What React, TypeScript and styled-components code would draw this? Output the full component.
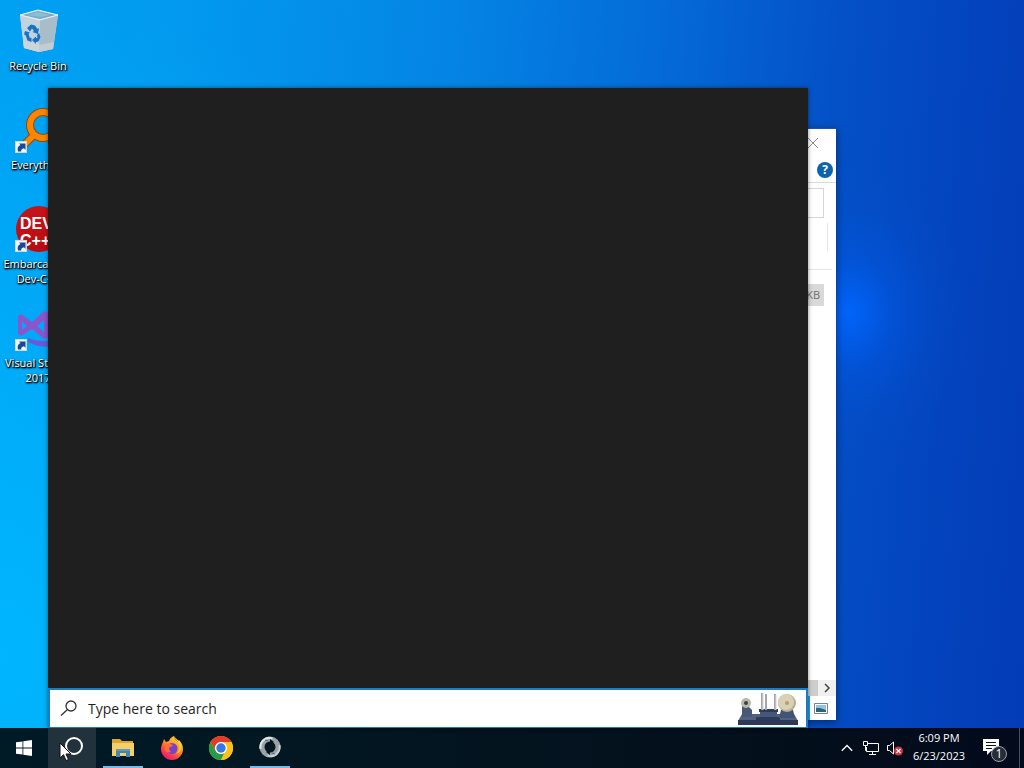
import React, { useState } from 'react'
import styled, { createGlobalStyle } from 'styled-components';

const GlobalStyle = createGlobalStyle`
  * {
    box-sizing: border-box;
  }
  body {
    margin: 0;
    font-family: "Open Sans", "Noto Sans", sans-serif;
    font-size: 11px;
    overflow: hidden;
  }
  button {
    padding: 0;
    border: none;
    background: none;
    font: inherit;
    color: inherit;
  }
  svg {
    display: block;
  }
`;

const Screen = styled.div`
  display: flex;
  flex-direction: column;
  height: 100vh;
`;

const Desktop = styled.main`
  position: relative;
  flex: 1;
  min-height: 0;
  background:
    radial-gradient(ellipse 120px 150px at 83% 43%, rgba(0, 102, 255, 0.9), rgba(0, 92, 240, 0.4) 35%, rgba(0, 84, 220, 0.12) 70%, rgba(0, 80, 210, 0) 100%),
    radial-gradient(ellipse 60% 90% at 0% 90%, rgba(0, 184, 255, 0.9), rgba(0, 176, 255, 0) 100%),
    linear-gradient(95deg, #00a0f2 0%, #029af0 16%, #0484e4 42%, #046cd8 60%, #0450c6 78%, #0342bc 92%, #033cb6 100%);
`;

const IconColumn = styled.div`
  display: flex;
  flex-direction: column;
  width: 76px;
`;

const Shortcut = styled.button`
  display: flex;
  flex-direction: column;
  align-items: center;
  gap: 2px;
  height: 99px;
  padding-top: 8px;
`;

const ShortcutLabel = styled.span`
  width: 72px;
  color: #fff;
  line-height: 15px;
  text-align: center;
  text-shadow: 0 1px 2px #000, 1px 1px 2px #000, 1px 1px 1px #000;
`;

const ExplorerWindow = styled.section`
  position: absolute;
  top: 128px;
  right: 188px;
  bottom: 8px;
  width: 640px;
  display: flex;
  flex-direction: column;
  background: #fff;
  border: 1px solid #1556b4;
  border-width: 1px 0 0 1px;
  box-shadow: 0 2px 8px rgba(0, 0, 0, 0.45);
  color: #6d6d6d;
`;

const TitleBar = styled.header`
  display: flex;
  align-items: center;
  justify-content: flex-end;
  height: 28px;
  padding-right: 17px;
`;

const RibbonBar = styled.div`
  display: flex;
  align-items: center;
  justify-content: flex-end;
  height: 26px;
  padding-right: 3px;
  border-bottom: 1px solid #dadada;
`;

const AddressRow = styled.div`
  padding: 5px 12px 5px 8px;
`;

const AddressBox = styled.div`
  height: 30px;
  border: 1px solid #d5d5d5;
`;

const ColumnRow = styled.div`
  height: 47px;
  margin: 0 4px 0 8px;
  padding-right: 4px;
  border-bottom: 1px solid #e5e5e5;
`;

const ColumnDivider = styled.div`
  height: 28px;
  border-right: 1px solid #e5e5e5;
`;

const FileArea = styled.div`
  flex: 1;
  padding: 14px 12px 0 8px;
`;

const FileRow = styled.div`
  height: 22px;
  padding-right: 4px;
  background: #d9d9d9;
  line-height: 22px;
  text-align: right;
`;

const ScrollTrack = styled.div`
  display: flex;
  justify-content: flex-end;
  height: 16px;
  background: #f0f0f0;
`;

const ScrollThumb = styled.div`
  flex: 1;
  background: #cdcdcd;
`;

const ScrollButton = styled.button`
  display: flex;
  align-items: center;
  justify-content: center;
  width: 18px;
`;

const StatusBar = styled.footer`
  display: flex;
  justify-content: flex-end;
  height: 24px;
`;

const ViewButton = styled.button`
  display: flex;
  align-items: center;
  width: 28px;
  padding-left: 4px;
  border-left: 2px solid #2a9ae4;
`;

const SearchPanel = styled.section`
  position: absolute;
  top: 88px;
  left: 48px;
  bottom: 0;
  width: 760px;
  display: flex;
  flex-direction: column;
  box-shadow: 0 0 4px rgba(0, 0, 0, 0.5);
`;

const Results = styled.div`
  flex: 1;
  background: #1f1f1f;
`;

const SearchBox = styled.label`
  display: flex;
  align-items: center;
  gap: 10px;
  height: 40px;
  padding: 0 8px 0 10px;
  border: 2px solid #1a7cc4;
  border-bottom-width: 1px;
  background: #fff;
`;

const SearchInput = styled.input`
  flex: 1;
  min-width: 0;
  padding: 0;
  border: none;
  outline: none;
  background: none;
  font-family: inherit;
  font-size: 14px;
  color: #1f1f1f;
  &::placeholder {
    color: #1f1f1f;
    opacity: 1;
  }
`;

const Taskbar = styled.nav`
  display: flex;
  height: 40px;
  background: linear-gradient(90deg, #001a26 0%, #021722 30%, #04101c 70%, #020a1b 100%);
  color: #fff;
`;

const TaskGroup = styled.div`
  display: flex;
  gap: 1px;
  padding-left: 3px;
`;

const TaskButton = styled.button<{ $hover?: boolean; $open?: boolean }>`
  position: relative;
  display: flex;
  align-items: center;
  justify-content: center;
  width: 48px;
  height: 40px;
  background: ${(p) => (p.$hover ? '#22323c' : 'none')};
  &::after {
    content: '';
    position: absolute;
    left: 4px;
    right: 4px;
    bottom: 0;
    height: 2px;
    background: ${(p) => (p.$open ? '#76b9ed' : 'none')};
  }
`;

const Pointer = styled.svg`
  position: absolute;
  left: 11px;
  top: 14px;
`;

const Tray = styled.div`
  display: flex;
  align-items: center;
  margin-left: auto;
`;

const TrayButton = styled.button`
  display: flex;
  align-items: center;
  justify-content: center;
  width: 24px;
  height: 40px;
`;

const Clock = styled.button`
  width: 64px;
  height: 40px;
  padding-bottom: 2px;
  line-height: 18px;
  text-align: center;
`;

const ActionCenter = styled.button`
  display: flex;
  align-items: center;
  justify-content: center;
  width: 48px;
  height: 40px;
`;

const ShowDesktop = styled.button`
  width: 5px;
  height: 40px;
  border-left: 1px solid #46505f;
`;

const ShortcutArrow = () => (
  <g>
    <rect x="1.500" y="34.500" width="11" height="11" fill="#f4f6f8" stroke="#cfd8df" />
    <path d="M4 44.500c-1-3 0-5.500 2.500-6.500L5 36.500h6.500V43L10 41.300c-2 .3-3 1.500-2.800 3.200z" fill="#174a96" />
  </g>
);

const RecycleIcon = () => (
  <svg width="48" height="48" viewBox="0 0 48 48" aria-hidden="true">
    <path d="M6 7 24 2l20 5-5 34-14 3-15-4z" fill="#c9d4dc" />
    <path d="M6 7l20 5-1 32-15-4z" fill="#c3d3de" />
    <path d="M26 12l18-5-5 34-14 3z" fill="#a9bcc9" />
    <path d="M8 7l16-4 18 4-16 4z" fill="#74abc8" />
    <path d="M13 7l11-3 12 3-10 2z" fill="#8dbdd4" />
    <path d="M6 7l18-5 20 5-18 5z" fill="none" stroke="#e6f0f5" />
    <path d="M9 33l16 4 15-3-1 7-14 3-15-4z" fill="#d4d7d8" opacity=".6" />
    <g fill="#1673c4">
      <path d="M13 20l4-3.500 4 1 2.500 3.500 1.500-1-1 6-5.500-2 1.500-1-2-2.500-2 3z" />
      <path d="M11 23l5 1.500-1.300 1 .8 4 2 .5v4l-4-1.500-2-5.500-1.500-.5z" />
      <path d="M25 25l1.500 4-2 4.500-2.500.5v2l-4-4 4-3.500v1.700l1.500-.7-.5-2.500z" />
    </g>
  </svg>
);

const EverythingIcon = () => (
  <svg width="48" height="48" viewBox="0 0 48 48" aria-hidden="true">
    <path d="M19 29 6 42" stroke="#8a4c0c" strokeWidth="8" strokeLinecap="round" />
    <circle cx="29" cy="18" r="13" fill="none" stroke="#8a4c0c" strokeWidth="8" />
    <circle cx="29" cy="18" r="13" fill="none" stroke="#ff8400" strokeWidth="6" />
    <path d="M19 29 6 42" stroke="#ff8400" strokeWidth="6" strokeLinecap="round" />
    <ShortcutArrow />
  </svg>
);

const DevIcon = () => (
  <svg width="48" height="48" viewBox="0 0 48 48" aria-hidden="true">
    <defs>
      <linearGradient id="dev" x1="0" y1="0" x2="0" y2="1">
        <stop offset="0" stopColor="#c4161a" />
        <stop offset="1" stopColor="#b80c10" />
      </linearGradient>
    </defs>
    <circle cx="25" cy="23" r="23" fill="url(#dev)" />
    <g fill="#fff" fontFamily="Liberation Sans" fontWeight="700" fontSize="16">
      <text x="6" y="23">DEV</text>
      <text x="6" y="40">C++</text>
    </g>
    <ShortcutArrow />
  </svg>
);

const StudioIcon = () => (
  <svg width="48" height="48" viewBox="0 0 48 48" aria-hidden="true">
    <path d="M4 11 7 9l11 8L30 6l10 4v20l-10 4-12-10-11 7-3-2z" fill="#8b56cc" />
    <path d="M8 16v9l5-4zM30 15l-7 6 7 6z" fill="#02a7fa" />
    <path d="M14 33c7 3 14 3 24 3l2 5c-9 2-18 0-26-4z" fill="#6a58d8" />
    <ShortcutArrow />
  </svg>
);

const PrinterArt = () => (
  <svg width="60" height="34" viewBox="0 0 60 34" aria-hidden="true">
    <path d="M4 22h52l4 7H0z" fill="#53617f" />
    <path d="M0 28h60v5H0z" fill="#2c3855" />
    <path d="M4 14l4-2 6 6v7H4z" fill="#4a5878" />
    <circle cx="8" cy="11" r="5" fill="#b9b9ab" />
    <circle cx="8" cy="11" r="2" fill="#3d4148" />
    <path d="M22 17h17v8H22z" fill="#46567a" />
    <path d="M21 17h19v3H21zM18 25h24v3H18z" fill="#2d3b59" />
    <path d="M24 1v17M28 2v16M37 2v16" stroke="#a5a4b0" strokeWidth="2" />
    <path d="M25 1v17M38 3v15" stroke="#e4d8d0" />
    <path d="M43 18h12l2 8H41z" fill="#425376" />
    <circle cx="49" cy="11" r="9" fill="#b9ae90" />
    <circle cx="48" cy="10" r="8" fill="#d9d0b6" />
    <circle cx="49" cy="11" r="2" fill="#b5a06c" />
  </svg>
);

const WindowsLogo = () => (
  <svg width="16" height="16" viewBox="0 0 16 16" fill="#fff" aria-hidden="true">
    <path d="M0 2.300 6.500 1.400v6.200H0zM7.300 1.300 16 0v7.600H7.300zM0 8.400h6.500v6.200L0 13.700zM7.300 8.400H16V16l-8.700-1.300z" />
  </svg>
);

const FolderIcon = () => (
  <svg width="22" height="20" viewBox="0 0 22 20" aria-hidden="true">
    <path d="M0 1h8l2 2h11v4H0z" fill="#e0a52e" />
    <path d="M0 5h22v13H0z" fill="#f7cf68" />
    <path d="M4 19v-8h14v8h-4v-4H8v4z" fill="#3f87b8" />
    <path d="M4 11h14v2H4z" fill="#5f9cb8" />
  </svg>
);

const FirefoxIcon = () => (
  <svg width="24" height="24" viewBox="0 0 24 24" aria-hidden="true">
    <defs>
      <linearGradient id="fox" x1="0.800" y1="0" x2="0.200" y2="1">
        <stop offset="0" stopColor="#ffe13d" />
        <stop offset=".45" stopColor="#ff8a1f" />
        <stop offset=".75" stopColor="#ff3750" />
        <stop offset="1" stopColor="#e31587" />
      </linearGradient>
    </defs>
    <path d="M3 6l1-3 2 3 3-1c1-3 3-4 5-5 0 3 3 4 4 6l1-2c3 3 4 6 4 9a11 11 0 0 1-22 0c0-3 1-5 2-7z" fill="url(#fox)" />
    <circle cx="12" cy="12.500" r="5.500" fill="#7542c9" />
    <path d="M5 9c2-2 4-1 6-1l2 1.500c-1 1.500-3 1-4 2.500 0 2 1 3 2 4-3 1-5 0-6-2z" fill="#ff6f34" />
    <path d="M14 0c0 3 4 4 5 9 1 4-1 7-3 9 6-2 7-9 3-13-2-2-4-3-5-5z" fill="#ffcd32" />
  </svg>
);

const ChromeIcon = () => (
  <svg width="24" height="24" viewBox="0 0 24 24" aria-hidden="true">
    <circle cx="12" cy="12" r="12" fill="#fbc116" />
    <path d="M1.600 6A12 12 0 0 1 22.400 6H12a6 6 0 0 0-5.200 9z" fill="#e33b2e" />
    <path d="M1.600 6 6.800 15A6 6 0 0 0 12 18l3-.800L12 24A12 12 0 0 1 1.600 6z" fill="#269b48" />
    <path d="M17.200 15 12 24a12 12 0 0 0 10.400-18H12a6 6 0 0 1 5.200 9z" fill="#fbc116" />
    <circle cx="12" cy="12" r="6" fill="#fff" />
    <circle cx="12" cy="12" r="4.700" fill="#3479e8" />
  </svg>
);

const SyncIcon = () => (
  <svg width="24" height="24" viewBox="0 0 24 24" fill="none" aria-hidden="true">
    <circle cx="12" cy="11" r="8" stroke="#98a2a7" strokeWidth="5" />
    <path d="M2.500 13a9.500 9.500 0 0 1 8-11.300l4 .8" stroke="#dfe4e5" strokeWidth="2" />
    <path d="M21.500 9a9.500 9.500 0 0 1-8 11.300l-4-.8" stroke="#c9d0d3" strokeWidth="2" />
    <path d="M12 3l4 3-4 3zM12 13v6l-4-3z" fill="#04141f" />
    <path d="M7 4l3 1M17 18l-3-1" stroke="#5d696f" />
  </svg>
);

const NetworkIcon = () => (
  <svg width="18" height="16" viewBox="0 0 18 16" fill="none" stroke="#fff" aria-hidden="true">
    <path d="M6 3.500h10.500v8H4.500V7M7 14.500h7M10.500 11.500v3" />
    <path d="M1.500 1.500h4v4h-4zM3.500 5.500v5h1" />
  </svg>
);

const SpeakerIcon = () => (
  <svg width="18" height="16" viewBox="0 0 18 16" fill="none" aria-hidden="true">
    <path d="M1.500 5.500h2L7.500 2v12l-4-3.500h-2z" stroke="#fff" />
    <circle cx="12.500" cy="11" r="4.500" fill="#c9383c" />
    <path d="M10.500 9l4 4M14.500 9l-4 4" stroke="#fff" strokeWidth="1.200" />
  </svg>
);

const NoteIcon = () => (
  <svg width="28" height="28" viewBox="0 0 28 28" aria-hidden="true">
    <path d="M2 5h16v12h-8l-4 4v-4H2z" fill="#fff" />
    <path d="M5 8.500h10M5 11.500h10M5 14.500h6" stroke="#0a1220" />
    <circle cx="18" cy="20" r="7.500" fill="#262d38" stroke="#9aa0a8" />
    <text x="18" y="24" fill="#fff" fontSize="12" textAnchor="middle">1</text>
  </svg>
);

interface ShortcutItem {
  label: string;
  icon: React.ReactNode;
}

const shortcuts: ShortcutItem[] = [
  { label: 'Recycle Bin', icon: <RecycleIcon /> },
  { label: 'Everything', icon: <EverythingIcon /> },
  { label: 'Embarcadero Dev-C++', icon: <DevIcon /> },
  { label: 'Visual Studio 2017', icon: <StudioIcon /> },
];

const apps = [
  { name: 'File Explorer', icon: <FolderIcon />, open: true },
  { name: 'Firefox', icon: <FirefoxIcon />, open: false },
  { name: 'Chrome', icon: <ChromeIcon />, open: false },
  { name: 'Sync', icon: <SyncIcon />, open: true },
];

function App() {
  const [query, setQuery] = useState('');

  return (
    <Screen>
      <GlobalStyle />
      <Desktop>
        <IconColumn>
          {shortcuts.map((item) => (
            <Shortcut key={item.label}>
              {item.icon}
              <ShortcutLabel>{item.label}</ShortcutLabel>
            </Shortcut>
          ))}
        </IconColumn>

        <ExplorerWindow>
          <TitleBar>
            <button aria-label="Close">
              <svg width="12" height="12" viewBox="0 0 12 12" stroke="#8c8c8c">
                <path d="M1 1l10 10M11 1 1 11" />
              </svg>
            </button>
          </TitleBar>
          <RibbonBar>
            <button aria-label="Help">
              <svg width="16" height="16" viewBox="0 0 16 16">
                <circle cx="8" cy="8" r="8" fill="#0e63b0" />
                <text x="8" y="12" fill="#fff" fontSize="12" fontWeight="700" textAnchor="middle">?</text>
              </svg>
            </button>
          </RibbonBar>
          <AddressRow>
            <AddressBox />
          </AddressRow>
          <ColumnRow>
            <ColumnDivider />
          </ColumnRow>
          <FileArea>
            <FileRow>KB</FileRow>
          </FileArea>
          <ScrollTrack>
            <ScrollThumb />
            <ScrollButton aria-label="Scroll right">
              <svg width="8" height="10" viewBox="0 0 8 10" fill="none" stroke="#444" strokeWidth="1.500">
                <path d="M2 1l4 4-4 4" />
              </svg>
            </ScrollButton>
          </ScrollTrack>
          <StatusBar>
            <ViewButton aria-label="Large thumbnails">
              <svg width="14" height="11" viewBox="0 0 14 11">
                <path d="M.5.5h13v10H.5z" fill="#fff" stroke="#6d86a8" />
                <path d="M2 2h10v7H2z" fill="#8fc3ea" />
                <path d="M2 5l4 0 6 2v2H2z" fill="#2d6474" />
              </svg>
            </ViewButton>
          </StatusBar>
        </ExplorerWindow>

        <SearchPanel>
          <Results />
          <SearchBox>
            <svg width="18" height="18" viewBox="0 0 18 18" fill="none" stroke="#333" strokeWidth="1.300" aria-hidden="true">
              <circle cx="11" cy="6" r="5" />
              <path d="M7.500 9.500 1 15.500" />
            </svg>
            <SearchInput
              aria-label="Search"
              placeholder="Type here to search"
              value={query}
              onChange={(e) => setQuery(e.target.value)}
            />
            <PrinterArt />
          </SearchBox>
        </SearchPanel>
      </Desktop>

      <Taskbar>
        <TaskButton aria-label="Start">
          <WindowsLogo />
        </TaskButton>
        <TaskButton $hover aria-label="Search">
          <svg width="24" height="24" viewBox="0 0 24 24" fill="none" aria-hidden="true">
            <circle cx="14" cy="10" r="8" stroke="#fff" strokeWidth="2" />
          </svg>
          <Pointer width="13" height="20" viewBox="0 0 13 20" aria-hidden="true">
            <path d="M1 1v15l3.500-3.300L7 18.500l2.500-1L7 12h5z" fill="#fff" stroke="#111" />
          </Pointer>
        </TaskButton>
        <TaskGroup>
          {apps.map((app) => (
            <TaskButton key={app.name} $open={app.open} aria-label={app.name}>
              {app.icon}
            </TaskButton>
          ))}
        </TaskGroup>
        <Tray>
          <TrayButton aria-label="Show hidden icons">
            <svg width="12" height="8" viewBox="0 0 12 8" fill="none" stroke="#fff" strokeWidth="1.300">
              <path d="M.8 6.800 6 1.500l5.200 5.300" />
            </svg>
          </TrayButton>
          <TrayButton aria-label="Network">
            <NetworkIcon />
          </TrayButton>
          <TrayButton aria-label="Volume">
            <SpeakerIcon />
          </TrayButton>
          <Clock>
            <div>6:09 PM</div>
            <div>6/23/2023</div>
          </Clock>
          <ActionCenter aria-label="Notifications">
            <NoteIcon />
          </ActionCenter>
          <ShowDesktop aria-label="Show desktop" />
        </Tray>
      </Taskbar>
    </Screen>
  );
}

export default App;
